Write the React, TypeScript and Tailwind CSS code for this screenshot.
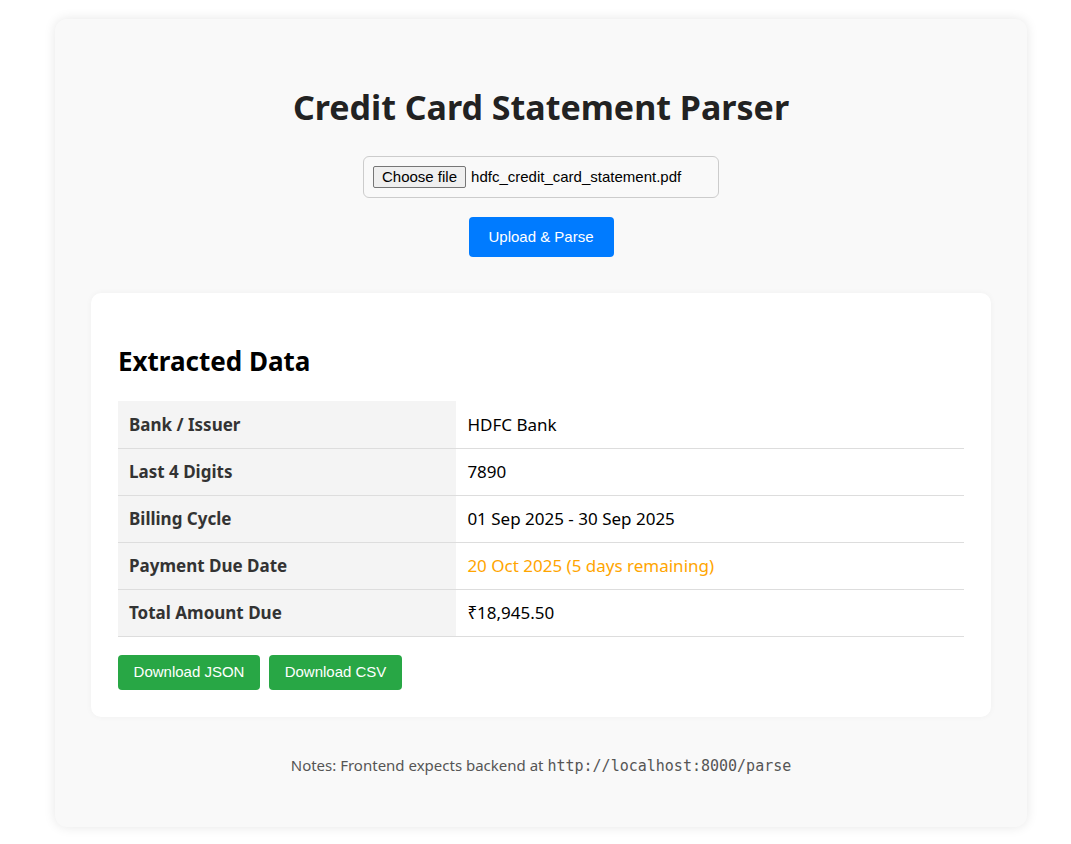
const rows: { label: string; value: string; warn?: boolean }[] = [
  { label: "Bank / Issuer", value: "HDFC Bank" },
  { label: "Last 4 Digits", value: "7890" },
  { label: "Billing Cycle", value: "01 Sep 2025 - 30 Sep 2025" },
  { label: "Payment Due Date", value: "20 Oct 2025 (5 days remaining)", warn: true },
  { label: "Total Amount Due", value: "₹18,945.50" },
];

export default function App() {
  return (
    <div className="min-h-screen bg-white pt-[19px] font-['Noto_Sans',sans-serif]">
      <div className="ml-[55px] w-[972px] rounded-xl bg-[#f9f9f9] px-[36px] pb-[50px] pt-[64px] shadow-[0_0_12px_rgba(0,0,0,0.1)]">
        <h1 className="text-center text-[34px] font-bold leading-[48px] text-[#222]">
          Credit Card Statement Parser
        </h1>

        <div className="mt-[25px] flex justify-center">
          <div className="flex h-[42px] w-[356px] items-center rounded-md border border-[#ccc] px-[9px] font-['Liberation_Sans',Arial,sans-serif] text-[15px] text-black">
            <span className="flex h-[22px] items-center rounded-[2px] border border-[#767676] bg-[#efefef] px-[8px]">
              Choose file
            </span>
            <span className="ml-[5px]">hdfc_credit_card_statement.pdf</span>
          </div>
        </div>

        <div className="mt-[19px] flex justify-center">
          <button className="h-[40px] w-[145px] rounded-[4px] bg-[#007bff] font-['Liberation_Sans',Arial,sans-serif] text-[15px] text-white">
            Upload &amp; Parse
          </button>
        </div>

        <div className="mt-[36px] rounded-[10px] bg-white px-[27px] pb-[27px] pt-[50px] shadow-[0_0_6px_rgba(0,0,0,0.04)]">
          <h2 className="text-[26px] font-bold leading-[36px] text-black">Extracted Data</h2>
          <table className="mt-[22px] w-full border-collapse text-[17px]">
            <tbody>
              {rows.map((r) => (
                <tr key={r.label} className="border-b border-[#ddd]">
                  <td className="h-[47px] w-[40%] bg-[#f4f4f4] px-[11px] font-bold text-[#333]">
                    {r.label}
                  </td>
                  <td
                    className={
                      r.warn
                        ? "h-[47px] px-[11px] text-[#ffa500]"
                        : "h-[47px] px-[11px] text-black"
                    }
                  >
                    {r.value}
                  </td>
                </tr>
              ))}
            </tbody>
          </table>
          <div className="mt-[18px] flex gap-[9px] font-['Liberation_Sans',Arial,sans-serif] text-[15px] text-white">
            <button className="h-[35px] w-[142px] rounded-[4px] bg-[#28a745]">Download JSON</button>
            <button className="h-[35px] w-[133px] rounded-[4px] bg-[#28a745]">Download CSV</button>
          </div>
        </div>

        <p className="mt-[37px] text-center text-[15px] text-[#555]">
          Notes: Frontend expects backend at{" "}
          <code className="font-['DejaVu_Sans_Mono',monospace] text-[15px]">
            http://localhost:8000/parse
          </code>
        </p>
      </div>
    </div>
  );
}
